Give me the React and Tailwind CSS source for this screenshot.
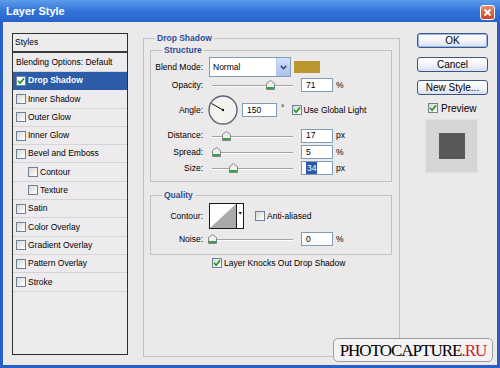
import React from 'react';

const listItems = [
  { label: 'Drop Shadow', checked: true, active: true },
  { label: 'Inner Shadow' },
  { label: 'Outer Glow' },
  { label: 'Inner Glow' },
  { label: 'Bevel and Emboss' },
  { label: 'Contour', indent: true },
  { label: 'Texture', indent: true },
  { label: 'Satin' },
  { label: 'Color Overlay' },
  { label: 'Gradient Overlay' },
  { label: 'Pattern Overlay' },
  { label: 'Stroke' },
];

const Check = ({ checked, className = '' }) => (
  <span
    className={`inline-flex w-[10px] h-[10px] shrink-0 items-center justify-center border border-[#6f8199] bg-gradient-to-br from-[#d8d8d2] to-white ${className}`}
  >
    {checked && (
      <svg width="8" height="8" viewBox="0 0 8 8">
        <path d="M1 3.8 L3.1 6.2 L7 1.4" fill="none" stroke="#1f9a25" strokeWidth="1.7" />
      </svg>
    )}
  </span>
);

const Thumb = () => (
  <svg width="9" height="10" viewBox="0 0 9 10">
    <path d="M4.5 0.5 L8.5 3.5 L8.5 9.5 L0.5 9.5 L0.5 3.5 Z" fill="#eef0ee" stroke="#7b8b80" />
    <rect x="1" y="7" width="7" height="2" fill="#3aa04a" />
  </svg>
);

const Slider = ({ pos }) => (
  <div className="relative w-[81px] h-[12px] ml-[9px] shrink-0">
    <div className="absolute left-0 right-0 top-[6px] h-[2px] border-t border-[#a3a3a3] border-b border-b-white" />
    <div className="absolute top-[1px]" style={{ left: pos - 4 }}>
      <Thumb />
    </div>
  </div>
);

const Field = ({ children, className = 'w-[32px] ml-[8px]' }) => (
  <div className={`h-[14px] shrink-0 border border-[#7f9db9] bg-white flex items-center pl-[4px] ${className}`}>
    {children}
  </div>
);

const Label = ({ children }) => (
  <span className="w-[52px] shrink-0 text-right">{children}</span>
);

const Button = ({ children, primary, className = '' }) => (
  <div
    className={`h-[15px] rounded-[3px] border border-[#3b5785] bg-gradient-to-b from-white via-[#f3f5fa] to-[#d6def0] flex items-center justify-center text-[10px] leading-none ${
      primary ? 'shadow-[inset_0_0_0_1px_#9dbbea]' : ''
    } ${className}`}
  >
    {children}
  </div>
);

export default function App() {
  return (
    <div className="relative w-[500px] h-[368px] flex flex-col bg-[#2b5fc8] overflow-hidden font-['Liberation_Sans',Arial,sans-serif] text-[8.5px] text-black">
      {/* title bar */}
      <div className="h-[22px] shrink-0 flex items-center pl-[6px] bg-gradient-to-b from-[#5d9deb] via-[#3174da] to-[#2862cb]">
        <span className="text-white font-bold text-[11px]">Layer Style</span>
        <div className="ml-auto mr-[5px] mt-[3px] w-[15px] h-[15px] rounded-[3px] border border-white bg-gradient-to-b from-[#ea8c6c] to-[#c8421f] flex items-center justify-center">
          <svg width="9" height="9" viewBox="0 0 9 9">
            <path d="M1.5 1.5 L7.5 7.5 M7.5 1.5 L1.5 7.5" stroke="white" strokeWidth="1.8" />
          </svg>
        </div>
      </div>

      {/* body */}
      <div className="flex-1 mx-[3px] mb-[3px] bg-[#ece9ea] flex items-start pl-[9px] pt-[11px]">
        {/* styles list */}
        <div className="w-[116px] h-[322px] shrink-0 border border-[#2f2f31] bg-[#edebed] flex flex-col">
          <div className="h-[19px] flex items-center pl-[2px] border-b-2 border-[#3a3a3c]">Styles</div>
          <div className="h-[19px] flex items-center pl-[3px] border-b border-[#d5d3d5]">Blending Options: Default</div>
          {listItems.map((it) => (
            <div
              key={it.label}
              className={`h-[18.3px] flex items-center border-b ${
                it.active ? 'bg-[#2d5ca9] text-white font-bold border-[#2d5ca9]' : 'border-[#d5d3d5]'
              } ${it.indent ? 'pl-[15px]' : 'pl-[3px]'}`}
            >
              <Check checked={it.checked} className={it.active ? 'bg-white bg-none' : ''} />
              <span className="ml-[2px]">{it.label}</span>
            </div>
          ))}
        </div>

        {/* main panel */}
        <fieldset className="ml-[15px] w-[257px] h-[324px] shrink-0 border border-[#c3c1c0]">
          <legend className="ml-[11px] px-[2px] leading-[11px] font-bold text-[#2b4f96]">Drop Shadow</legend>

          <fieldset className="ml-[6px] mr-[7px] mt-[1px] border border-[#c3c1c0] pt-[1px] pb-[5px]">
            <legend className="ml-[11px] px-[2px] leading-[11px] font-bold text-[#2b4f96]">Structure</legend>

            <div className="flex items-center h-[20px]">
              <Label>Blend Mode:</Label>
              <div className="ml-[6px] w-[82px] h-[20px] shrink-0 border border-[#7f9db9] bg-white flex items-center">
                <span className="pl-[3px] flex-1">Normal</span>
                <span className="w-[14px] h-full bg-gradient-to-b from-[#d3e0f8] to-[#a9c0ee] border-l border-[#b8caee] flex items-center justify-center">
                  <svg width="7" height="5" viewBox="0 0 7 5">
                    <path d="M0.8 0.8 L3.5 3.8 L6.2 0.8" fill="none" stroke="#233a6e" strokeWidth="1.4" />
                  </svg>
                </span>
              </div>
              <div className="ml-[3px] w-[26px] h-[12px] bg-[#b8972f]" />
            </div>

            <div className="flex items-center h-[16px]">
              <Label>Opacity:</Label>
              <Slider pos={58} />
              <Field>71</Field>
              <span className="ml-[3px]">%</span>
            </div>

            <div className="flex items-center h-[34px]">
              <Label>Angle:</Label>
              <svg className="ml-[5px] shrink-0" width="30" height="30" viewBox="0 0 30 30">
                <circle cx="15" cy="15" r="14" fill="#f4f4ef" stroke="#5b6579" strokeWidth="1.4" />
                <line x1="15" y1="15" x2="3.5" y2="8.5" stroke="#111" strokeWidth="1" />
                <circle cx="15" cy="15" r="1.2" fill="#111" />
              </svg>
              <Field className="w-[35px] ml-[4px]">150</Field>
              <span className="ml-[4px] self-start mt-[9px]">°</span>
              <Check checked className="ml-[8px]" />
              <span className="ml-[1px]">Use Global Light</span>
            </div>

            <div className="flex items-center h-[17px]">
              <Label>Distance:</Label>
              <Slider pos={14} />
              <Field>17</Field>
              <span className="ml-[3px]">px</span>
            </div>

            <div className="flex items-center h-[16px]">
              <Label>Spread:</Label>
              <Slider pos={4} />
              <Field>5</Field>
              <span className="ml-[3px]">%</span>
            </div>

            <div className="flex items-center h-[16px]">
              <Label>Size:</Label>
              <Slider pos={21} />
              <Field>
                <span className="bg-[#2c56aa] text-white px-[1px]">34</span>
              </Field>
              <span className="ml-[3px]">px</span>
            </div>
          </fieldset>

          <fieldset className="ml-[6px] mr-[7px] mt-[8px] border border-[#c3c1c0] pb-[7px]">
            <legend className="ml-[11px] px-[2px] leading-[11px] font-bold text-[#2b4f96]">Quality</legend>

            <div className="flex items-center h-[30px]">
              <Label>Contour:</Label>
              <svg className="ml-[6px] shrink-0" width="35" height="26" viewBox="0 0 35 26">
                <rect x="0.5" y="0.5" width="34" height="25" fill="white" stroke="#1a1a1a" />
                <polygon points="1,25 27,1 27,25" fill="#a9a9a9" />
                <line x1="27.5" y1="1" x2="27.5" y2="25" stroke="#1a1a1a" />
                <polygon points="29.5,9 33,9 31.25,11.5" fill="#111" />
              </svg>
              <Check className="ml-[11px]" />
              <span className="ml-[2px]">Anti-aliased</span>
            </div>

            <div className="flex items-center h-[16px]">
              <Label>Noise:</Label>
              <Slider pos={0} />
              <Field>0</Field>
              <span className="ml-[3px]">%</span>
            </div>
          </fieldset>

          <div className="flex items-center mt-[2px] ml-[68px]">
            <Check checked />
            <span className="ml-[2px]">Layer Knocks Out Drop Shadow</span>
          </div>
        </fieldset>

        {/* buttons */}
        <div className="ml-[17px] w-[71px] shrink-0 flex flex-col">
          <Button primary>OK</Button>
          <Button className="mt-[9px]">Cancel</Button>
          <Button className="mt-[8px]">New Style...</Button>
          <div className="mt-[8px] h-[10px] flex items-center pl-[11px]">
            <Check checked />
            <span className="ml-[3px] text-[10px]">Preview</span>
          </div>
          <div className="mt-[6px] ml-[8px] w-[53px] h-[54px] bg-[#d5d5d5] border border-[#e2e2e2] flex items-center justify-center">
            <div className="w-[26px] h-[26px] bg-[#585858]" />
          </div>
        </div>
      </div>

      {/* watermark */}
      <div className="absolute left-[333px] top-[338px] w-[160px] h-[24px] rounded-[5px] border border-[#9c9c9c] bg-[#f3f3f3] flex items-center justify-center font-['Liberation_Serif',serif] text-[17px] tracking-[-1px] leading-none">
        <span>PHOTOCAPTURE</span>
        <span className="text-[#d2202c]">.RU</span>
      </div>
    </div>
  );
}
